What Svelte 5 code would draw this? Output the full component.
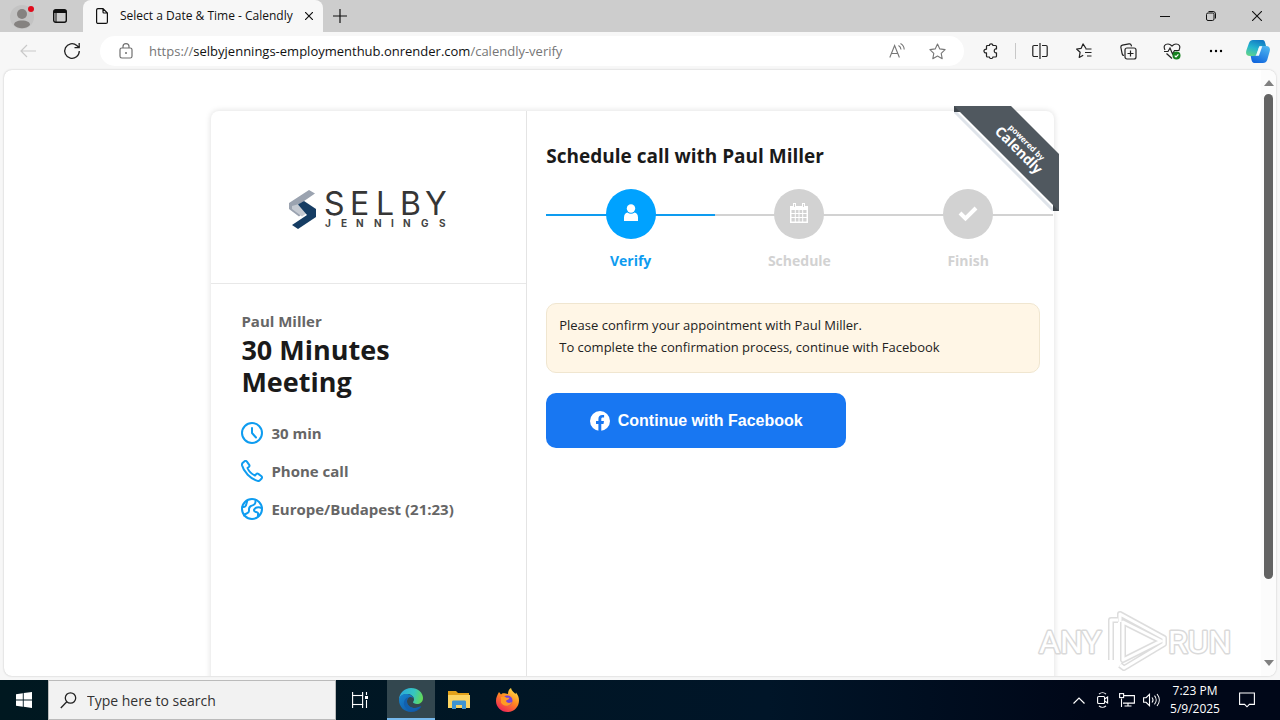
<script>

    const steps = [
        { name: "Verify", icon: "user", active: true },
        { name: "Schedule", icon: "calendar", active: false },
        { name: "Finish", icon: "check", active: false }
    ];

    const details = [
        { icon: "clock", text: "30 min" },
        { icon: "phone", text: "Phone call" },
        { icon: "globe", text: "Europe/Budapest (21:23)" }
    ];

    let search = "";

</script>

<div class="screen">

    <header class="tabs">
        <button class="profile" aria-label="Profile">
            <svg width="24" height="28" viewBox="0 0 24 28">
                <circle cx="12" cy="15" r="12" fill="#c3c3c3" />
                <circle cx="12" cy="12" r="5" fill="#858280" />
                <path d="M4 23c0-3 3-4.500 8-4.500s8 1.500 8 4.500c-2 2.500-5 3.200-8 3.200S6 25.500 4 23z" fill="#858280" />
                <circle cx="21" cy="7" r="3" fill="#e00b1c" />
            </svg>
        </button>
        <button class="workspaces" aria-label="Tab actions">
            <svg width="14" height="14" viewBox="0 0 14 14" fill="none" stroke="#111">
                <rect x="0.700" y="0.700" width="12.600" height="12.600" rx="2" stroke-width="1.400" />
                <path d="M1 2.500h12" stroke-width="3" />
                <path d="M3 3v10" stroke-width="1" />
            </svg>
        </button>
        <div class="tab">
            <svg width="12" height="16" viewBox="0 0 12 16" fill="none" stroke="#111" stroke-width="1.200">
                <path d="M2 .6h5l4.400 4.400v8.900a1.500 1.500 0 0 1-1.500 1.500H2.100A1.500 1.500 0 0 1 .6 13.900V2.100A1.500 1.500 0 0 1 2 .6zM7 .8v3.200a1 1 0 0 0 1 1h3.200" />
            </svg>
            <span class="tab_title">Select a Date &amp; Time - Calendly</span>
            <button class="close" aria-label="Close tab">
                <svg width="8" height="8" viewBox="0 0 8 8" stroke="#111" stroke-width="1.200"><path d="M0 0l8 8M8 0L0 8" /></svg>
            </button>
        </div>
        <button class="new_tab" aria-label="New tab">
            <svg width="14" height="14" viewBox="0 0 14 14" stroke="#111" stroke-width="1.200"><path d="M7 0v14M0 7h14" /></svg>
        </button>
        <div class="window_buttons">
            <button aria-label="Minimize">
                <svg width="10" height="10" viewBox="0 0 10 10" stroke="#111"><path d="M0 5.500h10" /></svg>
            </button>
            <button aria-label="Restore">
                <svg width="10" height="10" viewBox="0 0 10 10" fill="none" stroke="#111">
                    <rect x="0.500" y="2" width="7.500" height="7.500" rx="1.500" />
                    <path d="M2.500.5H7A2.500 2.500 0 0 1 9.500 3v4.500" />
                </svg>
            </button>
            <button aria-label="Close">
                <svg width="10" height="10" viewBox="0 0 10 10" stroke="#111" stroke-width="1.100"><path d="M0 0l10 10M10 0L0 10" /></svg>
            </button>
        </div>
    </header>

    <nav class="toolbar">
        <button class="nav_button" aria-label="Back">
            <svg width="16" height="14" viewBox="0 0 16 14" fill="none" stroke="#c9c9c9" stroke-width="1.200"><path d="M16 7H1M7 1L1 7l6 6" /></svg>
        </button>
        <button class="nav_button" aria-label="Refresh">
            <svg width="18" height="18" viewBox="0 0 18 18" fill="none" stroke="#222" stroke-width="1.300">
                <path d="M16.300 9A7.300 7.300 0 1 1 13.800 3.500L16 5.500M16.200 1v4.700h-4.700" />
            </svg>
        </button>
        <div class="address">
            <svg width="14" height="16" viewBox="0 0 14 16" fill="none" stroke="#707070" stroke-width="1.200">
                <rect x="1" y="5" width="12" height="10" rx="1.800" />
                <path d="M4 5V3.600a3 3 0 0 1 6 0V5" />
                <circle cx="7" cy="10" r="1" fill="#707070" stroke="none" />
            </svg>
            <span class="url">https://<b>selbyjennings-employmenthub.onrender.com</b>/calendly-verify</span>
            <button aria-label="Read aloud">
                <svg width="16" height="16" viewBox="0 0 16 16" fill="none" stroke="#777" stroke-width="1.100">
                    <path d="M.8 14.500L5.600 2.500l4.800 12M2.500 10.500h6.300M9.500 2.500a5 5 0 0 1 2.500 4M11.500.6a7 7 0 0 1 3.700 6" />
                </svg>
            </button>
            <button aria-label="Add to favorites">
                <svg width="17" height="17" viewBox="0 0 17 17" fill="none" stroke="#777" stroke-width="1.100" stroke-linejoin="round">
                    <path d="M8.500 1l2.300 4.900 5.300.7-3.900 3.700 1 5.400-4.700-2.600-4.700 2.600 1-5.400L.9 6.600l5.300-.7z" />
                </svg>
            </button>
        </div>
        <div class="tools">
            <button aria-label="Extensions">
                <svg width="16" height="16" viewBox="0 0 16 16" fill="none" stroke="#222" stroke-width="1.200" stroke-linejoin="round">
                    <path d="M4.500 2.500h2c-.4-2.300 3.700-2.300 3.300 0h2.700c.6 0 1 .4 1 1V6c-3-.8-3 4.600 0 3.800v3.200c0 .6-.4 1-1 1H9.800c.4 2-3.700 2-3.300 0h-2a1 1 0 0 1-1-1v-3.200c-3.400.6-3.400-4 0-3.600V3.500c0-.6.4-1 1-1z" />
                </svg>
            </button>
            <i class="divider"></i>
            <button aria-label="Split screen">
                <svg width="16" height="16" viewBox="0 0 16 16" fill="none" stroke="#222" stroke-width="1.200">
                    <path d="M6 2.500H2a1.200 1.200 0 0 0-1.200 1.200v8.600A1.200 1.200 0 0 0 2 13.500h4M10 2.500h4a1.200 1.200 0 0 1 1.200 1.200v8.600a1.200 1.200 0 0 1-1.200 1.200h-4M8 0v16" />
                </svg>
            </button>
            <button aria-label="Favorites">
                <svg width="16" height="16" viewBox="0 0 16 16" fill="none" stroke="#222" stroke-width="1.200" stroke-linejoin="round">
                    <path d="M10 5.500L7 .9 5.200 5.300.6 6l3.500 3.300-.9 5.200 4-2.300M9.500 6h6M9 9.500h6.500M11 13h4.500" />
                </svg>
            </button>
            <button aria-label="Collections">
                <svg width="17" height="17" viewBox="0 0 17 17" fill="none" stroke="#222" stroke-width="1.200">
                    <rect x="5" y="5" width="11" height="11" rx="2" />
                    <path d="M10.500 7.500v6M7.500 10.500h6M4 12.500A2 2 0 0 1 2.200 11L.9 4.500a2 2 0 0 1 1.500-2.300L9 .9a2 2 0 0 1 2.300 1.500l.2 1" />
                </svg>
            </button>
            <button aria-label="Browser essentials">
                <svg width="18" height="17" viewBox="0 0 18 17" fill="none" stroke="#222" stroke-width="1.200">
                    <path d="M2 7C0 3 2 1 5 1c2 0 3 1 4 2 1-1 2-2 4-2 3 0 5 2 3 6M1 8.500h4L7 5l2.500 6 2-3.500h5M3.500 10.500L9 15.500" />
                    <circle cx="13.500" cy="12.500" r="4" fill="#16811f" stroke="none" />
                    <path d="M11.700 12.600l1.300 1.300 2.400-2.600" stroke="#fff" />
                </svg>
            </button>
            <button aria-label="Settings and more">
                <svg width="14" height="4" viewBox="0 0 14 4"><circle cx="2" cy="2" r="1.200" /><circle cx="7" cy="2" r="1.200" /><circle cx="12" cy="2" r="1.200" /></svg>
            </button>
            <button aria-label="Copilot">
                <svg width="24" height="23" viewBox="0 0 24 23">
                    <defs>
                        <linearGradient id="cop1" x1="0.600" y1="0" x2="0.200" y2="1"><stop offset="0" stop-color="#127bc4" /><stop offset="0.500" stop-color="#25b5cf" /><stop offset="1" stop-color="#62d38a" /></linearGradient>
                        <linearGradient id="cop2" x1="0.800" y1="0" x2="0.300" y2="1"><stop offset="0" stop-color="#4db6f0" /><stop offset="1" stop-color="#1166dd" /></linearGradient>
                    </defs>
                    <path d="M7 0h9.500c2 0 2.300 1.500 3 4l.5 2h-4c-2 0-3 1-3.500 3l-1.500 5c-.5 1.500-1.500 2-3 2H4c-4 0-4.500-3-3.500-6L3 3C3.700 1 5 0 7 0z" fill="url(#cop1)" />
                    <path d="M17 23H8.500c-2.200 0-2.800-2-3.200-4l-.6-3H8c2 0 3-.8 3.500-2.500l1.600-5C13.600 7 14.500 6 16.500 6H20c4 0 4.500 3 3.500 6l-2.300 8c-.7 2-2 3-4.200 3z" fill="url(#cop2)" />
                    <path d="M13.300 6.200h3l-3.400 9.600h-3z" fill="#f3fafd" />
                </svg>
            </button>
        </div>
    </nav>

    <div class="page">
        <main>
            <div class="card">

                <aside>
                    <div class="company">
                        <svg width="160" height="42" viewBox="0 0 160 42" role="img" aria-label="Selby Jennings">
                            <path d="M0 14L20 1l6 3.500L10 15.500l7 6-7 6L0 20z" fill="#9ba3b0" />
                            <path d="M3 17l7-2 8 9-5 3.500L3 20z" fill="#c5cad2" />
                            <path d="M9 15.500L15 12l12 8v8L9 40l-6-4 15-10z" fill="#153c63" />
                            <text class="logo_big" y="26" x="35 61 87 111 136">SELBY</text>
                            <text class="logo_small" y="38" x="36 52 67 85 102 114 132 150">JENNINGS</text>
                        </svg>
                    </div>
                    <div class="meeting">
                        <p class="host">Paul Miller</p>
                        <h1>30 Minutes Meeting</h1>
                        <ul>
                            {#each details as detail}
                            <li>
                                <svg width="22" height="22" viewBox="0 0 22 22" fill="none" stroke="#0e9cf0" stroke-width="2" stroke-linecap="round" stroke-linejoin="round">
                                    {#if detail.icon === "clock"}
                                    <circle cx="11" cy="11" r="10" />
                                    <path d="M11 6v5l4 4.500" />
                                    {:else if detail.icon === "phone"}
                                    <path d="M1.800 2.800l1.800-1.600c.8-.6 1.700-.4 2.300.4l2.300 3.200c.5.800.3 1.600-.4 2.200L6.500 8c1 2.500 4.500 6.200 7.500 7.500l1.200-1.400c.6-.6 1.400-.7 2.100-.2l3.200 2.400c.7.600.7 1.500.1 2.200l-1.500 1.700c-.6.700-1.600 1-2.500.7C9.500 19 2.500 11.500 1 5.300c-.2-1 .1-1.900.8-2.500z" />
                                    {:else}
                                    <circle cx="11" cy="11" r="10" />
                                    <path d="M3 17.500c1-2.500 5-1.500 5-4.500 0-2.500-.5-4 2-5 3-1 5-1.500 4.500-6.200M1.500 9c2.500.5 3.500-1 4-3.500l.7-2.500M20.500 10c-3-1.500-7-.5-7.500 2-.4 2.500 3.500 1.500 4 3 .3 1-.3 2.500 0 3.500" />
                                    {/if}
                                </svg>
                                <span>{detail.text}</span>
                            </li>
                            {/each}
                        </ul>
                    </div>
                </aside>

                <section>
                    <h2>Schedule call with Paul Miller</h2>

                    <ol class="steps">
                        {#each steps as step}
                        <li class:active={step.active}>
                            <div class="circle">
                                {#if step.icon === "user"}
                                <svg width="16" height="20" viewBox="0 0 16 20" fill="#fff">
                                    <circle cx="8" cy="4.500" r="4.200" />
                                    <path d="M1 17v-3.500C1 10.500 2.500 9 4.500 8.500c2 1.700 5 1.700 7 0 2 .5 3.500 2 3.500 5V17z" />
                                </svg>
                                {:else if step.icon === "calendar"}
                                <svg width="20" height="22" viewBox="0 0 20 22">
                                    <path d="M1 3h18v17H1zM4 0h3v4H4zM13 0h3v4h-3z" fill="#fff" />
                                    <path d="M2.500 7h15v11.500h-15z" fill="#d2d2d2" />
                                    <path d="M6.300 7v12M10 7v12M13.700 7v12M2 10.500h16M2 14.500h16" stroke="#fff" />
                                    <path d="M5.500 1v3M14.500 1v3" stroke="#d2d2d2" />
                                </svg>
                                {:else}
                                <svg width="20" height="16" viewBox="0 0 20 16" fill="none" stroke="#fff" stroke-width="4"><path d="M2 7l5.500 5.500L18 2" /></svg>
                                {/if}
                            </div>
                            <span>{step.name}</span>
                        </li>
                        {/each}
                    </ol>

                    <p class="notice">
                        Please confirm your appointment with Paul Miller.<br>
                        To complete the confirmation process, continue with Facebook
                    </p>

                    <button class="facebook" type="button">
                        <svg width="20" height="20" viewBox="0 0 20 20">
                            <circle cx="10" cy="10" r="10" fill="#fff" />
                            <path d="M8.400 20v-7H6v-3h2.400V7.900c0-2.600 1.500-4 3.800-4 .9 0 1.900.2 1.900.2v2.500h-1.300c-1.200 0-1.500.7-1.500 1.500V10H14l-.5 3h-2.200v7z" fill="#1877f2" />
                        </svg>
                        Continue with Facebook
                    </button>
                </section>

                <svg class="ribbon" width="105" height="105" viewBox="0 0 105 105">
                    <path d="M0 5l100 100" stroke="#dfe4ea" stroke-width="3" />
                    <path d="M0 0h6v6H0zM99 99h6v6h-6z" fill="#3f464c" />
                    <path d="M0 0h57l48 48v57L0 0z" fill="#50585f" />
                    <g transform="translate(72 37) rotate(45)">
                        <text class="powered" x="0" y="2">powered by</text>
                        <text class="calendly" x="0" y="15">Calendly</text>
                    </g>
                </svg>

            </div>
        </main>

        <div class="scrollbar">
            <svg width="10" height="6" viewBox="0 0 10 6" fill="#808080"><path d="M5 0l5 6H0z" /></svg>
            <div class="track"><div class="thumb"></div></div>
            <svg width="10" height="6" viewBox="0 0 10 6" fill="#808080"><path d="M5 6l5-6H0z" /></svg>
        </div>

        <svg class="watermark" width="200" height="64" viewBox="0 0 200 64">
            <g stroke="#d6d6d6" stroke-width="3" fill="#fff" paint-order="stroke" stroke-linejoin="round">
                <text x="3" y="45">ANY</text>
                <text x="132" y="45">RUN</text>
            </g>
            <g fill="none" stroke-linejoin="round">
                <path d="M75 52V12h7M87 14l38 19-38 19zM84 14V6l44 24v6L88 60l-4-3" stroke="#dadada" stroke-width="6" />
                <path d="M75 52V12h7M87 14l38 19-38 19zM84 14V6l44 24v6L88 60l-4-3" stroke="#fff" stroke-width="3" />
            </g>
        </svg>
    </div>

    <footer class="taskbar">
        <button class="start" aria-label="Start">
            <svg width="16" height="16" viewBox="0 0 16 16" fill="#fff"><path d="M0 2.300l6.800-1v6.200H0zM7.700 1.100L16 0v7.500H7.700zM0 8.400h6.800v6.300L0 13.700zM7.700 8.400H16V16l-8.300-1.200z" /></svg>
        </button>
        <label class="search">
            <svg width="17" height="17" viewBox="0 0 17 17" fill="none" stroke="#222" stroke-width="1.300"><circle cx="10.500" cy="6" r="5.200" /><path d="M6.800 9.800L.8 16" /></svg>
            <input type="text" bind:value={search} placeholder="Type here to search" aria-label="Search">
        </label>
        <button class="app task_view" aria-label="Task view">
            <svg width="17" height="16" viewBox="0 0 17 16" fill="none" stroke="#fff" stroke-width="1.100">
                <path d="M.6 0v3.500h10V0M.6 16v-3.500h10V16M14.500 0v3M14.500 8v8" />
                <rect x="0.600" y="3.500" width="10" height="9" />
                <path d="M13 5.500h3" stroke-width="3" />
            </svg>
        </button>
        <button class="app open" aria-label="Microsoft Edge">
            <svg width="24" height="24" viewBox="0 0 24 24">
                <defs>
                    <linearGradient id="edge1" x1="0" y1="0.300" x2="1" y2="0.500"><stop offset="0" stop-color="#2aa8de" /><stop offset="0.600" stop-color="#36c6c0" /><stop offset="1" stop-color="#62d957" /></linearGradient>
                    <linearGradient id="edge2" x1="0" y1="0" x2="1" y2="1"><stop offset="0" stop-color="#1786cf" /><stop offset="1" stop-color="#0f4f9f" /></linearGradient>
                </defs>
                <path d="M0 12C0 5 5.500 0 12 0c7 0 12 4.800 12 10 0 4-3 6-6 6-2.500 0-4-1-4-1.700 0-.6 1-1.100 1-3C15 8 11.500 6 8 6 3.500 6 1 8.500 0 12z" fill="url(#edge1)" />
                <path d="M0 12c0-4 3.500-6 7-6 4.500 0 7.500 2.400 7.800 5.200C14.300 9.800 13 9 11.500 9 9 9 8 11.500 8 13.500c0 4 3.500 6.500 8 6.500 2.500 0 4.500-1 5.500-1.700.5-.3.900.1.600.6C20 22 16.500 24 12 24 5.500 24 0 19 0 12z" fill="url(#edge2)" />
                <path d="M8 13.500c0 4 3.500 6.500 8 6.500 2.500 0 4.500-1 5.500-1.700-4 6-13 6-16-.3-2-4.500 1-9 6-9C9 9 8 11.500 8 13.500z" fill="#1260ae" />
            </svg>
        </button>
        <button class="app" aria-label="File Explorer">
            <svg width="22" height="20" viewBox="0 0 22 20">
                <path d="M0 1h8l2 2h11v5H0z" fill="#e3a21a" />
                <path d="M0 5h22v13H0z" fill="#fcd462" />
                <path d="M4 19v-7c0-1 .5-1.500 1.500-1.500h11c1 0 1.500.5 1.500 1.500v7h-4v-4H8v4z" fill="#3f94d1" />
            </svg>
        </button>
        <button class="app" aria-label="Firefox">
            <svg width="23" height="24" viewBox="0 0 23 24">
                <defs>
                    <linearGradient id="fox" x1="0.800" y1="0" x2="0.200" y2="1"><stop offset="0" stop-color="#ffe14a" /><stop offset="0.450" stop-color="#ff8a1f" /><stop offset="1" stop-color="#ee1c5c" /></linearGradient>
                </defs>
                <path d="M3 4l2 2.500C6 5 7.500 5 8.500 5.300L12 6c0-3 1-5 3-6 .5 3 3 4 4.500 6l.5-1.500c2 2.500 3 5 3 8C23 19 18 24 11.500 24S0 19 0 13c0-4 1.500-6 3-9z" fill="url(#fox)" />
                <circle cx="11.500" cy="12.500" r="5" fill="#7542d8" />
                <path d="M5 9c2-1 4-.5 5.500.8h3c-.5 2-3 2-3.500 3 0 2 4 3 6 1-1 4-8 6-11 1z" fill="#ff9a25" />
            </svg>
        </button>
        <div class="tray">
            <svg width="16" height="7" viewBox="0 0 12 7" fill="none" stroke="#fff" stroke-width="1.200"><path d="M.5 6.500L6 1l5.500 5.500" /></svg>
            <svg width="16" height="16" viewBox="0 0 12 16" fill="none" stroke="#fff" stroke-width="1.100"><rect x="0.600" y="4.500" width="7" height="7" rx="1" /><path d="M7.600 7l3-2v6l-3-2M2 2.200C4 .3 7 .3 9 2.200M2 13.800c2 1.900 5 1.900 7 0" /></svg>
            <svg width="16" height="14" viewBox="0 0 16 14" fill="none" stroke="#fff" stroke-width="1.100"><path d="M5 2.600h10.400v7.500H4M9 10v3M5.500 13h7M2.500 5.500V14" /><rect x="0.600" y="0.600" width="4" height="4" /></svg>
            <svg width="17" height="14" viewBox="0 0 17 14" fill="none" stroke="#fff" stroke-width="1.100"><path d="M.6 4.700h2.500L6.500 1.300v11.400L3.100 9.300H.6zM9 4.500c1.200 1.500 1.200 3.500 0 5M11.500 2.700c2.200 2.500 2.200 6.100 0 8.600M14 1c3 3.600 3 8.400 0 12" /></svg>
        </div>
        <div class="clock">
            <span>7:23 PM</span>
            <span>5/9/2025</span>
        </div>
        <button class="notifications" aria-label="Notifications">
            <svg width="16" height="16" viewBox="0 0 16 16" fill="none" stroke="#fff" stroke-width="1.100"><path d="M.6 1h14.800v11.400h-5L8 14.800l-2.400-2.400h-5z" /></svg>
        </button>
    </footer>

</div>

<style>

:global(body){
    margin: 0;
    font-family: "Open Sans", "Noto Sans", sans-serif;
}

.screen{
    display: flex;
    flex-direction: column;
    height: 100vh;
    overflow: hidden;
    background-color: #f7f7f7;
}

button{
    display: flex;
    align-items: center;
    justify-content: center;
    padding: 0;
    border: none;
    background: none;
    font-family: inherit;
    cursor: pointer;
}

svg{
    display: block;
    flex-shrink: 0;
}

h1, h2, p, ul, ol{
    margin: 0;
    padding: 0;
}

li{
    list-style: none;
}

/* Browser */

.tabs{
    display: flex;
    flex-shrink: 0;
    height: 32px;
    background-color: #cdcdcd;
}

.profile{
    width: 44px;
}

.workspaces{
    width: 32px;
}

.tab{
    display: flex;
    align-items: center;
    box-sizing: border-box;
    width: 240px;
    margin-left: 7px;
    padding: 0 12px 0 13px;
    gap: 12px;
    border-radius: 8px 8px 0 0;
    background-color: #f7f7f7;
}

.tab_title{
    flex: 1;
    font-size: 12px;
    line-height: 16px;
    white-space: nowrap;
    color: #111;
}

.close{
    width: 8px;
}

.new_tab{
    width: 34px;
}

.window_buttons{
    display: flex;
    margin-left: auto;
}

.window_buttons button{
    width: 46px;
}

.toolbar{
    display: flex;
    flex-shrink: 0;
    align-items: center;
    height: 38px;
    padding-left: 6px;
}

.nav_button{
    width: 44px;
    height: 32px;
}

.address{
    display: flex;
    flex: 1;
    align-items: center;
    height: 30px;
    margin-left: 6px;
    padding: 0 19px;
    border-radius: 15px;
    background-color: #fff;
}

.address button{
    width: 16px;
    margin-left: 24px;
}

.url{
    flex: 1;
    margin-left: 16px;
    font-size: 13px;
    line-height: 20px;
    white-space: nowrap;
    color: #767676;
}

.url b{
    font-weight: normal;
    color: #111;
}

.tools{
    display: flex;
    align-items: center;
    margin-left: 5px;
}

.tools button{
    width: 44px;
    height: 32px;
}

.tools button:last-child{
    width: 40px;
    margin-right: 2px;
}

.divider{
    width: 1px;
    height: 16px;
    margin: 0 2px;
    background-color: #c8c8c8;
}

.page{
    position: relative;
    display: flex;
    flex: 1;
    min-height: 0;
    margin: 0 4px 4px;
    overflow: hidden;
    border-radius: 8px;
    box-shadow: 0 0 2px #bbb;
    background-color: #fff;
}

.page main{
    flex: 1;
    padding-top: 41px;
}

.scrollbar{
    display: flex;
    flex-direction: column;
    align-items: center;
    justify-content: space-between;
    width: 15px;
    padding: 10px 0;
    gap: 8px;
    background-color: #fcfcfc;
}

.track{
    flex: 1;
}

.thumb{
    width: 9px;
    height: 87%;
    border-radius: 5px;
    background-color: #636363;
}

/* Booking card */

.card{
    position: relative;
    display: flex;
    width: 67%;
    min-height: 720px;
    margin: 0 auto;
    border-radius: 8px;
    box-shadow: 0 0 6px rgba(0, 0, 0, 0.14);
}

aside{
    box-sizing: border-box;
    width: 37.5%;
    border-right: 1px solid #e4e4e4;
}

section{
    flex: 1;
    padding: 32px 1px 0 19px;
}

.company{
    display: flex;
    align-items: center;
    justify-content: center;
    height: 173px;
    padding-top: 25px;
    box-sizing: border-box;
    border-bottom: 1px solid #e8e8e8;
}

.company svg{
    overflow: visible;
}

.logo_big{
    font-family: Inter, sans-serif;
    font-size: 32px;
    fill: #363636;
}

.logo_small{
    font-family: Inter, sans-serif;
    font-size: 10px;
    font-weight: bold;
    fill: #444;
}

.meeting{
    padding: 26px 30px 0;
    color: #666;
}

.host{
    font-size: 15px;
    font-weight: bold;
    line-height: 22px;
}

h1{
    font-size: 27px;
    line-height: 32px;
    color: #1a1a1a;
}

.meeting h1{
    max-width: 200px;
    margin: 2px 0 16px;
}

.meeting li{
    display: flex;
    align-items: center;
    height: 38px;
    gap: 8px;
    font-size: 15px;
    font-weight: bold;
    line-height: 22px;
}

h2{
    font-size: 19px;
    line-height: 26px;
    color: #1a1a1a;
}

.steps{
    display: flex;
    margin-top: 20px;
}

.steps li{
    position: relative;
    display: flex;
    flex: 1;
    flex-direction: column;
    align-items: center;
    gap: 12px;
    font-size: 14px;
    font-weight: bold;
    line-height: 20px;
    color: #d2d2d2;
}

.steps li::before{
    content: "";
    position: absolute;
    top: 25px;
    left: 0;
    width: 100%;
    height: 2px;
    background-color: #d2d2d2;
}

.circle{
    position: relative;
    display: flex;
    align-items: center;
    justify-content: center;
    width: 50px;
    height: 50px;
    border-radius: 50%;
    background-color: #d2d2d2;
}

.steps li.active{
    color: #0e9cf0;
}

.steps li.active::before{
    background-color: #0e9cf0;
}

.steps li.active .circle{
    background-color: #00a2ff;
}

.notice{
    margin: 32px 13px 20px 0;
    padding: 10px 12px 14px;
    border: 1px solid #f0e6d0;
    border-radius: 10px;
    background-color: #fff6e6;
    font-size: 13px;
    line-height: 22px;
    color: #222;
}

.facebook{
    width: 300px;
    height: 55px;
    gap: 8px;
    border-radius: 10px;
    background-color: #1877f2;
    font-family: "Liberation Sans", Arial, sans-serif;
    font-size: 16px;
    font-weight: bold;
    color: #fff;
}

.ribbon{
    position: absolute;
    top: -5px;
    right: -5px;
}

.ribbon text{
    font-weight: bold;
    text-anchor: middle;
    fill: #fff;
}

.powered{
    font-size: 8px;
}

.calendly{
    font-size: 14px;
}

.watermark{
    position: absolute;
    right: 40px;
    bottom: 4px;
    opacity: 0.9;
}

.watermark text{
    font-family: "Roboto", sans-serif;
    font-size: 32px;
}

/* Taskbar */

.taskbar{
    display: flex;
    flex-shrink: 0;
    height: 40px;
    background: linear-gradient(90deg, #001820, #001528 60%, #000718 85%);
    color: #fff;
}

.start, .app{
    width: 48px;
}

.task_view{
    margin-right: 3px;
}

.app.open{
    box-sizing: border-box;
    padding-top: 2px;
    border-bottom: 2px solid #76b9ed;
    background-color: #33474f;
}

.search{
    display: flex;
    align-items: center;
    box-sizing: border-box;
    width: 288px;
    padding: 0 11px;
    gap: 10px;
    border: 1px solid #bbb;
    background-color: #f2f2f2;
}

.search input{
    flex: 1;
    min-width: 0;
    padding: 0;
    border: none;
    outline: none;
    background: none;
    font-family: inherit;
    font-size: 14px;
}

.search input::placeholder{
    color: #333;
}

.tray{
    display: flex;
    align-items: center;
    margin-left: auto;
    gap: 8px;
}

.clock{
    display: flex;
    flex-direction: column;
    align-items: center;
    justify-content: center;
    width: 70px;
    font-size: 12px;
    line-height: 18px;
}

.notifications{
    width: 34px;
    margin-right: 16px;
}

</style>
